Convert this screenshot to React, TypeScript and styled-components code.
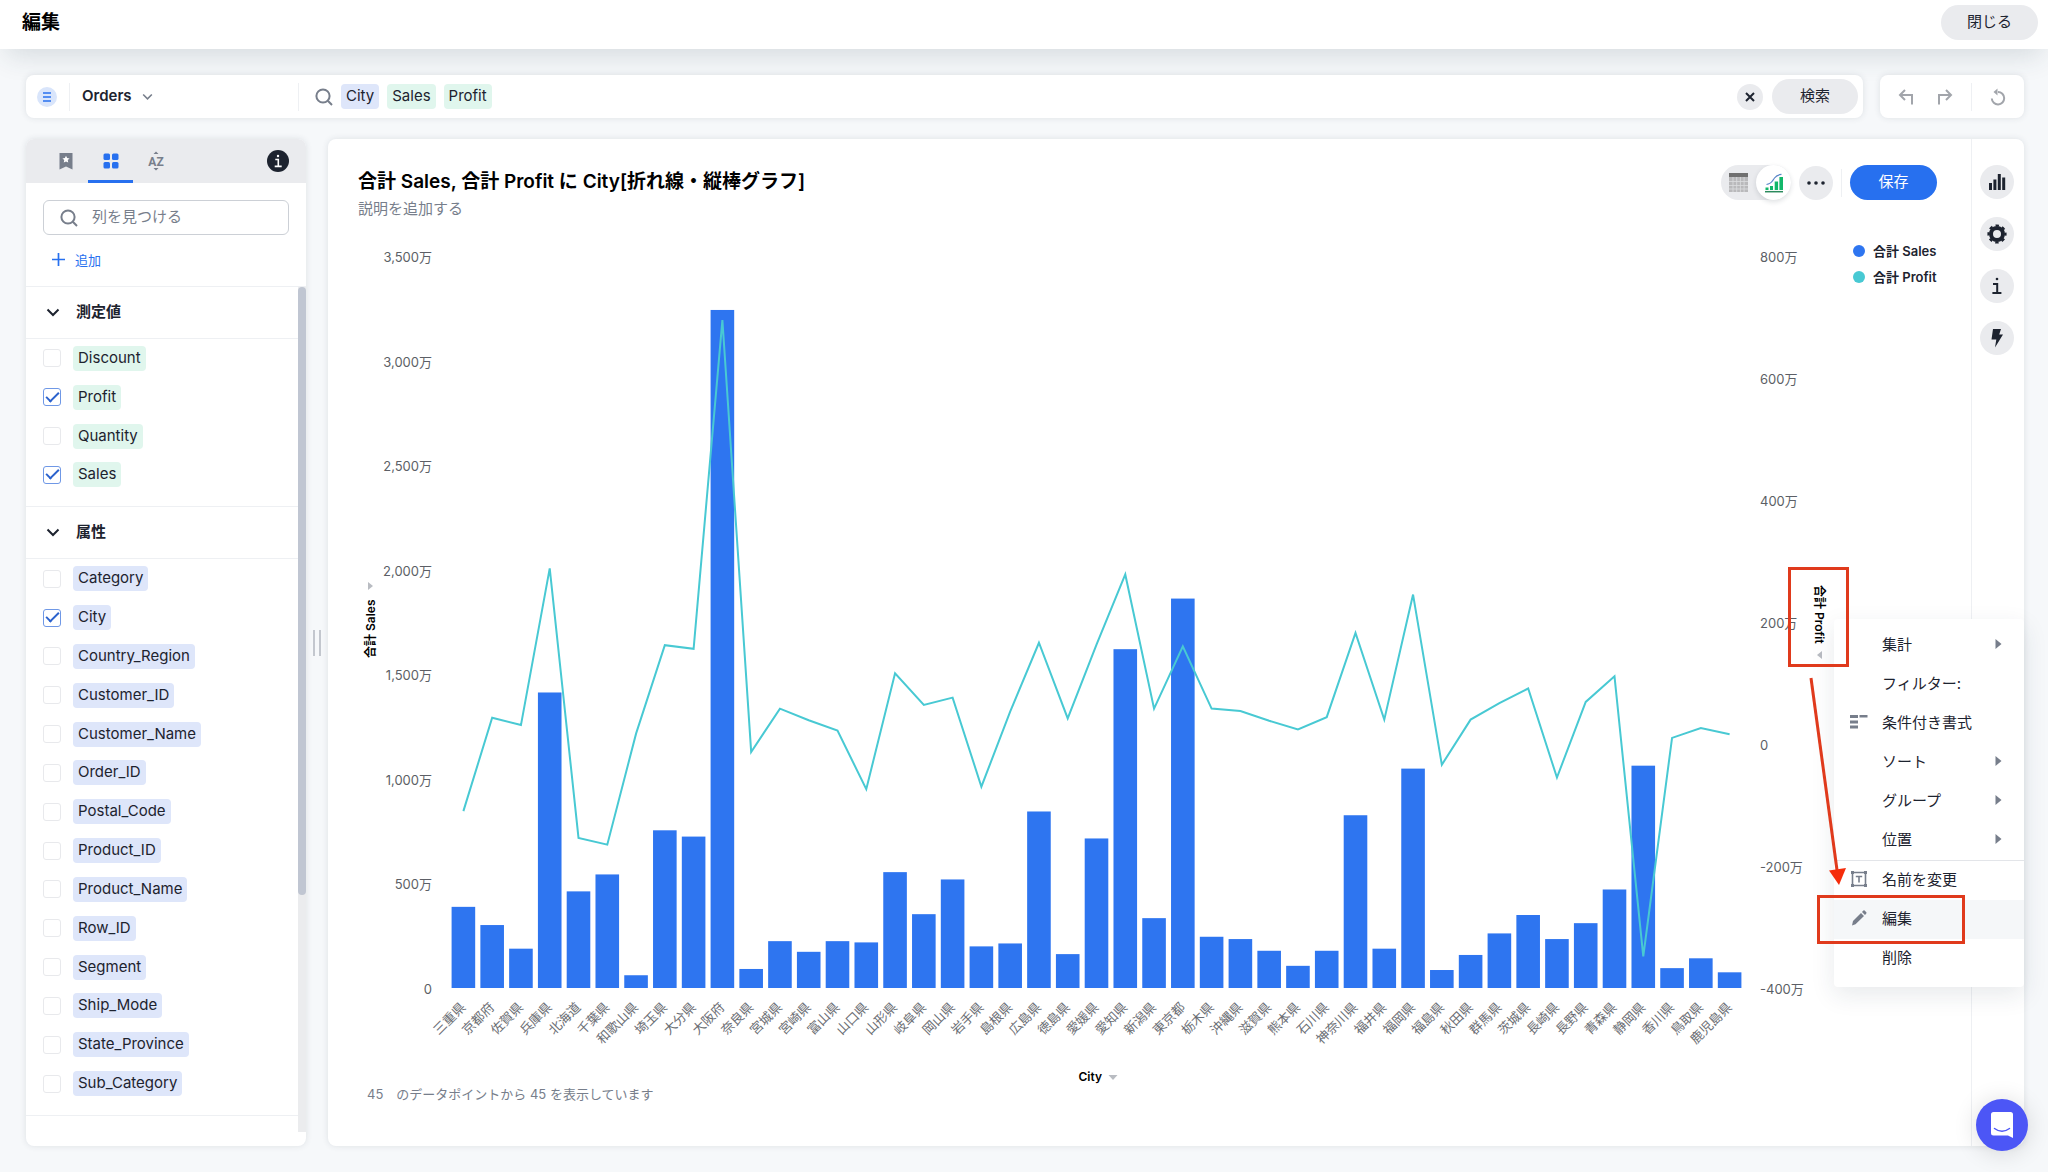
import React, { useLayoutEffect, useRef, useState } from "react";
import styled, { createGlobalStyle, css } from "styled-components";

/* ---------- data ---------- */

type Point = { city: string; sales: number; profit: number };

// Amounts are in units of 10,000 (万)
const points: Point[] = [
  { city: "三重県", sales: 388, profit: -110 },
  { city: "京都府", sales: 301, profit: 43 },
  { city: "佐賀県", sales: 188, profit: 31 },
  { city: "兵庫県", sales: 1413, profit: 288 },
  { city: "北海道", sales: 462, profit: -154 },
  { city: "千葉県", sales: 543, profit: -165 },
  { city: "和歌山県", sales: 61, profit: 17 },
  { city: "埼玉県", sales: 754, profit: 162 },
  { city: "大分県", sales: 724, profit: 156 },
  { city: "大阪府", sales: 3242, profit: 695 },
  { city: "奈良県", sales: 91, profit: -13 },
  { city: "宮城県", sales: 224, profit: 58 },
  { city: "宮崎県", sales: 173, profit: 39 },
  { city: "富山県", sales: 224, profit: 22 },
  { city: "山口県", sales: 218, profit: -74 },
  { city: "山形県", sales: 554, profit: 116 },
  { city: "岐阜県", sales: 353, profit: 64 },
  { city: "岡山県", sales: 519, profit: 76 },
  { city: "岩手県", sales: 199, profit: -70 },
  { city: "島根県", sales: 213, profit: 53 },
  { city: "広島県", sales: 844, profit: 166 },
  { city: "徳島県", sales: 162, profit: 42 },
  { city: "愛媛県", sales: 715, profit: 163 },
  { city: "愛知県", sales: 1620, profit: 278 },
  { city: "新潟県", sales: 334, profit: 58 },
  { city: "東京都", sales: 1862, profit: 160 },
  { city: "栃木県", sales: 245, profit: 58 },
  { city: "沖縄県", sales: 234, profit: 54 },
  { city: "滋賀県", sales: 178, profit: 38 },
  { city: "熊本県", sales: 106, profit: 24 },
  { city: "石川県", sales: 178, profit: 44 },
  { city: "神奈川県", sales: 826, profit: 182 },
  { city: "福井県", sales: 188, profit: 40 },
  { city: "福岡県", sales: 1049, profit: 245 },
  { city: "福島県", sales: 86, profit: -34 },
  { city: "秋田県", sales: 158, profit: 40 },
  { city: "群馬県", sales: 261, profit: 67 },
  { city: "茨城県", sales: 349, profit: 91 },
  { city: "長崎県", sales: 234, profit: -55 },
  { city: "長野県", sales: 310, profit: 69 },
  { city: "青森県", sales: 471, profit: 111 },
  { city: "静岡県", sales: 1063, profit: -348 },
  { city: "香川県", sales: 95, profit: 10 },
  { city: "鳥取県", sales: 142, profit: 26 },
  { city: "鹿児島県", sales: 75, profit: 16 },
];

const measures = ["Discount", "Profit", "Quantity", "Sales"];
const attributes = [
  "Category", "City", "Country_Region", "Customer_ID", "Customer_Name", "Order_ID", "Postal_Code",
  "Product_ID", "Product_Name", "Row_ID", "Segment", "Ship_Mode", "State_Province", "Sub_Category",
];
const selected = ["Profit", "Sales", "City"];

const BLUE = "#2e75f0";
const TEAL = "#48c9d3";
const INK = "#1d232f";
const GRAY = "#777e8b";
const FILL = "#eaebee";
const LINE = "#eef0f3";
const RED = "#e03a1c";
const FONT = `Inter, "Noto Sans CJK JP", sans-serif`;

/* ---------- styles ---------- */

const GlobalStyle = createGlobalStyle`
  *, *::before, *::after { box-sizing: border-box; }
  body { margin: 0; background: #f6f8fa; }
  body, button, input, select { font-family: ${FONT}; color: ${INK}; }
  button { border: 0; padding: 0; background: none; cursor: pointer; }
  h1, h2, h3, p, ul { margin: 0; padding: 0; list-style: none; }
  svg { display: block; }
`;

const Page = styled.div`
  height: 100vh;
  min-height: 900px;
  display: flex;
  flex-direction: column;
`;

const TopBar = styled.header`
  display: flex;
  justify-content: space-between;
  align-items: flex-start;
  height: 49px;
  padding: 5px 10px 0 22px;
  background: #fff;
  box-shadow: 0 12px 28px -6px rgba(40, 60, 75, 0.16);
`;

const PageTitle = styled.h1`
  font-size: 19px;
  line-height: 36px;
  font-weight: 700;
  color: #000;
`;

const Pill = styled.button<{ $primary?: boolean; $width: number }>`
  width: ${(p) => p.$width}px;
  height: 35px;
  padding-bottom: 4px;
  border-radius: 18px;
  font-size: 15px;
  background: ${(p) => (p.$primary ? "#2770ef" : FILL)};
  color: ${(p) => (p.$primary ? "#fff" : INK)};
`;

const Workspace = styled.div`
  flex: 1;
  min-height: 0;
  display: flex;
  flex-direction: column;
  gap: 21px;
  padding: 26px 24px;
`;

const QueryRow = styled.div`
  display: flex;
  gap: 17px;
  height: 43px;
`;

const card = css`
  background: #fff;
  border-radius: 8px;
  box-shadow: 0 0 6px rgba(40, 55, 75, 0.12);
`;

const SearchBar = styled.form`
  ${card}
  flex: 1;
  display: flex;
  align-items: center;
  margin-left: 2px;
  padding: 0 5px 0 11px;
`;

const SourceBadge = styled.span`
  display: grid;
  place-items: center;
  width: 20px;
  height: 20px;
  border-radius: 50%;
  background: #d9e5fb;
`;

const Rule = styled.span`
  width: 1px;
  height: 28px;
  background: ${LINE};
`;

const SourcePicker = styled.label`
  display: flex;
  align-items: center;
  width: 230px;
  margin-left: 12px;
  padding-left: 12px;
  height: 28px;
  border-left: 1px solid ${LINE};
  border-right: 1px solid ${LINE};
`;

const SourceSelect = styled.select`
  appearance: none;
  border: 0;
  width: 60px;
  padding: 0 0 2px;
  background: none;
  font-size: 15px;
  font-weight: 600;
`;

const SearchTokens = styled.div`
  flex: 1;
  display: flex;
  align-items: center;
  gap: 8px;
  padding-left: 16px;
`;

const Chip = styled.span<{ $measure: boolean }>`
  padding: 0 5px 2px;
  border-radius: 4px;
  font-size: 15px;
  line-height: 23px;
  background: ${(p) => (p.$measure ? "#e0f6ed" : "#dee6fa")};
`;

const TokenInput = styled.input`
  flex: 1;
  height: 34px;
  border: 0;
  outline: 0;
  background: none;
  font-size: 15px;
`;

const ClearButton = styled.button`
  display: grid;
  place-items: center;
  width: 26px;
  height: 26px;
  margin-right: 9px;
  border-radius: 50%;
  background: ${FILL};
`;

const History = styled.div`
  ${card}
  display: flex;
  align-items: center;
  width: 144px;
  color: #a2a5ab;
`;

const HistoryButton = styled.button<{ $wide?: boolean }>`
  display: grid;
  place-items: center;
  flex: ${(p) => (p.$wide ? "0 0 52px" : "0 0 39px")};
  height: 34px;
  color: inherit;

  &:first-child { margin-left: 6px; }
  & + & { margin-right: 7px; }
`;

const Panels = styled.div`
  flex: 1;
  min-height: 0;
  display: grid;
  grid-template-columns: 280px 22px minmax(0, 1fr);
  margin-left: 2px;
`;

const Sidebar = styled.aside`
  ${card}
  display: flex;
  flex-direction: column;
  min-height: 0;
  padding-bottom: 14px;
`;

const Tabs = styled.div`
  display: flex;
  align-items: stretch;
  height: 44px;
  padding-left: 17px;
  padding-right: 17px;
  border-radius: 8px 8px 0 0;
  background: ${FILL};
`;

const Tab = styled.button<{ $active?: boolean }>`
  display: grid;
  place-items: center;
  width: 45px;
  border-top: 3px solid transparent;
  border-bottom: 3px solid ${(p) => (p.$active ? "#2770ef" : "transparent")};
`;

const InfoButton = styled.button`
  margin-left: auto;
`;

const FinderBox = styled.label`
  display: flex;
  align-items: center;
  gap: 14px;
  height: 35px;
  margin: 17px 17px 0;
  padding: 0 16px;
  border: 1px solid #ccd0d6;
  border-radius: 6px;
`;

const FinderInput = styled.input`
  flex: 1;
  min-width: 0;
  border: 0;
  outline: 0;
  padding: 0 0 2px;
  background: none;
  font-size: 15px;
  line-height: 22px;
  &::placeholder { color: #777e8b; opacity: 1; }
`;

const AddButton = styled.button`
  display: flex;
  align-items: center;
  align-self: flex-start;
  gap: 10px;
  height: 26px;
  margin: 11px 0 14px 26px;
  font-size: 13px;
  color: #2770ef;
`;

const ScrollArea = styled.div`
  flex: 1;
  min-height: 0;
  display: flex;
  border-top: 1px solid ${LINE};
`;

const Groups = styled.div`
  flex: 1;
  display: flex;
  flex-direction: column;
  padding-bottom: 16px;
`;

const ScrollTrack = styled.div`
  width: 8px;
  background: #ebecee;
`;

const ScrollThumb = styled.div`
  height: 72%;
  border-radius: 4px;
  background: #c0c6d2;
`;

const GroupHeader = styled.button`
  display: flex;
  align-items: center;
  gap: 16px;
  flex: 0 0 52px;
  padding: 0 0 2px 20px;
  border-bottom: 1px solid ${LINE};
  font-size: 15px;
  font-weight: 700;
  line-height: 24px;
`;

const FieldList = styled.ul<{ $grow: number }>`
  flex: ${(p) => p.$grow} 1 0;
  display: grid;
  grid-auto-rows: 1fr;
  align-items: center;
`;

const GroupEnd = styled.div`
  height: 13px;
  border-bottom: 1px solid ${LINE};
`;

const Field = styled.label`
  display: flex;
  align-items: center;
  gap: 12px;
  padding-left: 17px;
`;

const Check = styled.input`
  appearance: none;
  display: grid;
  place-items: center;
  width: 18px;
  height: 18px;
  margin: 0;
  border: 1px solid #e8e9ec;
  border-radius: 3px;

  &:checked { border-color: #6f98e6; }
  &:checked::after {
    content: "";
    width: 13px;
    height: 7px;
    margin-bottom: 4px;
    border: solid #2b62cd;
    border-width: 0 0 2px 2px;
    transform: rotate(-45deg);
  }
`;

const Grip = styled.div`
  display: flex;
  gap: 4px;
  align-self: center;
  justify-content: center;
  height: 26px;
`;

const GripBar = styled.span`
  width: 2px;
  background: #c3c7ce;
`;

const Answer = styled.main`
  ${card}
  position: relative;
  display: flex;
  min-width: 0;
`;

const AnswerBody = styled.section`
  flex: 1;
  min-width: 0;
  display: flex;
  flex-direction: column;
  padding: 26px 34px 43px 30px;
`;

const AnswerHeader = styled.div`
  display: flex;
  justify-content: space-between;
  align-items: flex-start;
`;

const AnswerTitle = styled.h2`
  font-size: 19px;
  line-height: 34px;
  font-weight: 600;
  color: #000;
`;

const AnswerNote = styled.p`
  font-size: 15px;
  line-height: 20px;
  color: ${GRAY};
`;

const Actions = styled.div`
  display: flex;
  align-items: center;
  gap: 8px;
`;

const Toggle = styled.div`
  display: flex;
  width: 70px;
  border-radius: 18px;
  background: ${FILL};
`;

const ToggleButton = styled.button<{ $on?: boolean }>`
  display: grid;
  place-items: center;
  width: 35px;
  height: 35px;
  border-radius: 50%;
  ${(p) => p.$on && css`
    background: #fff;
    box-shadow: 0 2px 5px rgba(30, 40, 60, 0.14);
  `}
`;

const RoundButton = styled.button`
  display: grid;
  place-items: center;
  width: 34px;
  height: 34px;
  border-radius: 50%;
  background: ${FILL};
`;

const ChartRow = styled.div`
  flex: 1;
  min-height: 0;
  display: flex;
  gap: 10px;
`;

const ChartBox = styled.div`
  flex: 1;
  min-width: 0;
  overflow: hidden;
`;

const Legend = styled.ul`
  width: 87px;
  padding: 19px 0 0 3px;
  font-size: 13px;
  font-weight: 600;
  line-height: 26px;
`;

const LegendItem = styled.li<{ $color: string }>`
  display: flex;
  align-items: center;
  gap: 8px;
  white-space: nowrap;
  &::before {
    content: "";
    width: 12px;
    height: 12px;
    border-radius: 50%;
    background: ${(p) => p.$color};
  }
`;

const Footnote = styled.p`
  display: flex;
  gap: 13px;
  padding-left: 9px;
  font-size: 13px;
  line-height: 18px;
  color: ${GRAY};
`;

const Rail = styled.nav`
  display: flex;
  flex-direction: column;
  align-items: center;
  gap: 18px;
  width: 53px;
  padding: 26px 2px 0 0;
  border-left: 1px solid ${LINE};
`;

const Menu = styled.div`
  position: absolute;
  top: 480px;
  right: 0;
  width: 190px;
  padding: 7px 0 9px;
  border-radius: 4px;
  background: #fff;
  box-shadow: 0 8px 24px rgba(30, 45, 70, 0.1);
`;

const MenuItem = styled.button<{ $active?: boolean }>`
  display: grid;
  grid-template-columns: 32px 1fr 7px;
  align-items: center;
  width: 100%;
  height: 39px;
  padding: 0 22px 4px 16px;
  font-size: 15px;
  text-align: left;
  background: ${(p) => (p.$active ? "#f5f7f9" : "none")};
`;

const MenuRule = styled.hr`
  height: 1px;
  margin: 0;
  border: 0;
  background: #e3e5e9;
`;

const Callout = styled.div<{ $top: number; $right: number; $width: number; $height: number }>`
  position: absolute;
  top: ${(p) => p.$top}px;
  right: ${(p) => p.$right}px;
  width: ${(p) => p.$width}px;
  height: ${(p) => p.$height}px;
  border: 3px solid ${RED};
  pointer-events: none;
`;

const CalloutArrow = styled.svg`
  position: absolute;
  top: 531px;
  right: 174px;
  pointer-events: none;
`;

const ChatButton = styled.button`
  position: fixed;
  right: 20px;
  bottom: 21px;
  display: grid;
  place-items: center;
  width: 52px;
  height: 52px;
  border-radius: 50%;
  background: #4c56f6;
  box-shadow: 0 2px 24px rgba(0, 0, 0, 0.14);
`;

/* ---------- icons ---------- */

const SearchIcon = () => (
  <svg width="18" height="18" viewBox="0 0 18 18" fill="none" stroke="#777e8b" strokeWidth="2">
    <circle cx="8" cy="8" r="6.6" />
    <path d="M12.8 12.8 17 17" />
  </svg>
);

const ChevronIcon = ({ color = INK, size = 14 }: { color?: string; size?: number }) => (
  <svg width={size} height={size} viewBox="0 0 14 14" fill="none" stroke={color} strokeWidth="2">
    <path d="m1.5 4.5 5.5 5.5 5.5-5.5" />
  </svg>
);

const InfoGlyph = ({ color, size }: { color: string; size: number }) => (
  <svg width={size} height={size} viewBox="0 0 18 18" fill="none" stroke={color} strokeWidth="2">
    <path d="M5 7h4.2v8.6M4.4 16h9" />
    <circle cx="9" cy="2" r="1.3" fill={color} stroke="none" />
  </svg>
);

const BookmarkIcon = () => (
  <svg width="14" height="18" viewBox="0 0 14 18" fill={GRAY}>
    <path d="M0.5 1h13v16.5L7 14.4.5 17.5z" />
    <path fill="#fff" d="m7 3.8 1.1 2.3 2.5.3-1.85 1.7.5 2.5L7 9.4l-2.25 1.2.5-2.5L3.4 6.4l2.5-.3z" />
  </svg>
);

const GridIcon = () => (
  <svg width="16" height="16" viewBox="0 0 16 16" fill="#2770ef">
    <rect x="0.5" y="0.5" width="6.5" height="6.5" rx="1.5" />
    <rect x="9" y="0.5" width="6.5" height="6.5" rx="1.5" />
    <rect x="0.5" y="9" width="6.5" height="6.5" rx="1.5" />
    <rect x="9" y="9" width="6.5" height="6.5" rx="1.5" />
  </svg>
);

const SortIcon = () => (
  <svg width="18" height="20" viewBox="0 0 18 20" fill={GRAY}>
    <path d="M6.5 3 9 0.5 11.5 3zM6.5 17 9 19.5 11.5 17z" />
    <text x="9" y="14.5" textAnchor="middle" fontFamily="Roboto, sans-serif" fontWeight="700" fontSize="12">AZ</text>
  </svg>
);

const UndoIcon = () => (
  <svg width="16" height="16" viewBox="0 0 16 16" fill="none" stroke="currentColor" strokeWidth="2">
    <path d="M7 1 2 6l5 5M2.5 6H14v9.5" />
  </svg>
);

const RedoIcon = () => (
  <svg width="16" height="16" viewBox="0 0 16 16" fill="none" stroke="currentColor" strokeWidth="2">
    <path d="m9 1 5 5-5 5M13.5 6H2v9.5" />
  </svg>
);

const ResetIcon = () => (
  <svg width="16" height="18" viewBox="0 0 16 18" fill="none" stroke="currentColor" strokeWidth="2">
    <path d="M8 4a6.2 6.2 0 1 1-6.2 6.5" />
    <path d="M7.5 0.5v7L3.5 4z" fill="currentColor" stroke="none" />
  </svg>
);

const TableIcon = () => (
  <svg width="19" height="19" viewBox="0 0 19 19">
    <rect x="0" y="0" width="19" height="19" fill="#b9b9bb" />
    <rect x="0" y="0" width="19" height="4" fill="#707070" />
    <path d="M0 8.5h19M0 12.5h19M0 16h19M4 4v15M7.7 4v15M11.4 4v15M15.1 4v15" stroke="#dcdddf" strokeWidth="0.8" />
  </svg>
);

const ComboIcon = () => (
  <svg width="20" height="20" viewBox="0 0 20 20">
    <path d="M1 18.7h18" stroke="#2b8a5d" strokeWidth="1.5" />
    <path d="M1.5 14.5h3V17h-3zM6 13h3v4H6zM10.7 8.5h3.4V17h-3.4zM15.4 4H19v13h-3.6z" fill="#12b76a" />
    <path d="M2.5 11.5c5-1 5-2.5 8-6.5 1.8-2.4 3.5-3.3 7-3.7" fill="none" stroke="#5a86c8" strokeWidth="1.2" />
  </svg>
);

const BarsIcon = () => (
  <svg width="18" height="18" viewBox="0 0 18 18" fill={INK}>
    <path d="M1 10h3v7H1zM5.4 6.5h3V17h-3zM9.8 1h3v16h-3zM14.2 4.5h3V17h-3z" />
  </svg>
);

const GearIcon = () => (
  <svg width="20" height="20" viewBox="0 0 20 20" fill="none" stroke={INK}>
    <circle cx="10" cy="10" r="6" strokeWidth="4" />
    <circle cx="10" cy="10" r="8.5" strokeWidth="2.2" strokeDasharray="3.4 3.276" strokeDashoffset="1.7" />
  </svg>
);

const BoltIcon = () => (
  <svg width="14" height="20" viewBox="0 0 14 20" fill={INK}>
    <path d="M3 1h8L9.2 6.5H13L5 19.5 6.3 11.5H1.5z" />
  </svg>
);

const FormatIcon = () => (
  <svg width="18" height="14" viewBox="0 0 18 14" fill={GRAY}>
    <path d="M0 0h8v3H0zM9.5 0h8v2.5h-8zM0 5.5h8v3H0zM0 10.500h8v3H0z" />
  </svg>
);

const RenameIcon = () => (
  <svg width="18" height="18" viewBox="0 0 18 18" fill="none" stroke={GRAY} strokeWidth="1.6">
    <path d="M2.5 2.5h13v13h-13zM5.8 6.5h6.4M9 6.5v6" />
    <path d="M1 1h3v3H1zM14 1h3v3h-3zM1 14h3v3H1zM14 14h3v3h-3z" fill={GRAY} stroke="none" />
  </svg>
);

const PencilIcon = () => (
  <svg width="18" height="18" viewBox="0 0 18 18" fill={GRAY}>
    <path d="M2 16.5 3 12 11 4l3 3-8.5 8.2zM12 3l1.4-1.4q.6-.5 1.2 0l1.7 1.7q.5.6 0 1.2L15 5.9z" />
  </svg>
);

const ChatIcon = () => (
  <svg width="24" height="28" viewBox="0 0 24 28">
    <path d="M3.5 1h17Q23 1 23 3.5V27l-5-2.5H3.5Q1 24.5 1 22V3.5Q1 1 3.5 1z" fill="#fff" />
    <path d="M4.5 17.5q7.5 5.5 15 0" fill="none" stroke="#4c56f6" strokeWidth="1.5" strokeLinecap="round" />
  </svg>
);

/* ---------- chart ---------- */

const AxisText = styled.text`
  font-family: ${FONT};
  font-size: 13px;
  fill: #5c5f66;
`;

const AxisTitle = styled.text`
  font-family: ${FONT};
  font-size: 12px;
  font-weight: 600;
  fill: #000;
`;

const CityLabel = styled(AxisText)`
  fill: #6b6e74;
`;

const margin = { top: 37, right: 96, bottom: 97, left: 91 };
const salesTicks = [0, 500, 1000, 1500, 2000, 2500, 3000, 3500];
const profitTicks = [-400, -200, 0, 200, 400, 600, 800];
const tickLabel = (v: number) => (v === 0 ? "0" : `${v.toLocaleString("en-US")}万`);

function ComboChart() {
  const box = useRef<HTMLDivElement>(null);
  const [size, setSize] = useState({ width: 1482, height: 864 });

  useLayoutEffect(() => {
    const node = box.current;
    if (!node) return;
    const measure = () => setSize({ width: node.clientWidth, height: node.clientHeight });
    measure();
    const observer = new ResizeObserver(measure);
    observer.observe(node);
    return () => observer.disconnect();
  }, []);

  const { width, height } = size;
  const plotWidth = width - margin.left - margin.right;
  const plotHeight = height - margin.top - margin.bottom;
  const base = margin.top + plotHeight;
  const right = margin.left + plotWidth;
  const step = plotWidth / points.length;
  const barWidth = step * 0.82;
  const x = (i: number) => margin.left + step * (i + 0.5);
  const ySales = (v: number) => base - (v / 3500) * plotHeight;
  const yProfit = (v: number) => base - ((v + 400) / 1200) * plotHeight;
  const middle = margin.top + plotHeight / 2;
  const center = margin.left + plotWidth / 2;

  return (
    <ChartBox ref={box}>
      <svg width={width} height={height} role="img" aria-label="合計 Sales, 合計 Profit に City">
        {salesTicks.map((t) => (
          <AxisText key={t} x={margin.left - 17} y={ySales(t) + 6} textAnchor="end">{tickLabel(t)}</AxisText>
        ))}
        {profitTicks.map((t) => (
          <AxisText key={t} x={right + 16} y={yProfit(t) + 6}>{tickLabel(t)}</AxisText>
        ))}
        {points.map((p, i) => (
          <rect key={p.city} x={x(i) - barWidth / 2} y={ySales(p.sales)} width={barWidth} height={base - ySales(p.sales)} fill={BLUE} />
        ))}
        <polyline
          points={points.map((p, i) => `${x(i)},${yProfit(p.profit)}`).join(" ")}
          fill="none"
          stroke={TEAL}
          strokeWidth="2"
        />
        {points.map((p, i) => (
          <CityLabel key={p.city} textAnchor="end" transform={`translate(${x(i) + 3} ${base + 20}) rotate(-45)`}>
            {p.city}
          </CityLabel>
        ))}
        <g transform={`translate(12 ${middle}) rotate(-90)`}>
          <AxisTitle x="-36" y="5">合計 Sales</AxisTitle>
          <path d="M32 -2h8l-4 5z" fill="#b9bcc2" />
        </g>
        <g transform={`translate(${width - 20} ${middle}) rotate(90)`}>
          <AxisTitle x="-37" y="5">合計 Profit</AxisTitle>
          <path d="M29 -2h8l-4 5z" fill="#b9bcc2" />
        </g>
        <AxisTitle x={center - 18} y={height - 4}>City</AxisTitle>
        <path d={`M${center + 12} ${height - 10}h9l-4.5 5z`} fill="#b9bcc2" />
      </svg>
    </ChartBox>
  );
}

/* ---------- page ---------- */

function FieldGroup({ title, fields, measure }: { title: string; fields: string[]; measure: boolean }) {
  return (
    <>
      <GroupHeader aria-expanded="true">
        <ChevronIcon />
        {title}
      </GroupHeader>
      <FieldList $grow={fields.length}>
        {fields.map((name) => (
          <li key={name}>
            <Field>
              <Check type="checkbox" defaultChecked={selected.includes(name)} />
              <Chip $measure={measure}>{name}</Chip>
            </Field>
          </li>
        ))}
      </FieldList>
      <GroupEnd />
    </>
  );
}

const Submenu = () => (
  <svg width="7" height="10" viewBox="0 0 7 10" fill={GRAY}>
    <path d="M0.5 0v10L6.5 5z" />
  </svg>
);

type Entry = { label: string; icon?: React.ReactNode; sub?: boolean; active?: boolean };

const menuTop: Entry[] = [
  { label: "集計", sub: true },
  { label: "フィルター:" },
  { label: "条件付き書式", icon: <FormatIcon /> },
  { label: "ソート", sub: true },
  { label: "グループ", sub: true },
  { label: "位置", sub: true },
];
const menuBottom: Entry[] = [
  { label: "名前を変更", icon: <RenameIcon /> },
  { label: "編集", icon: <PencilIcon />, active: true },
  { label: "削除" },
];

const Entries = ({ items }: { items: Entry[] }) => (
  <>
    {items.map((e) => (
      <MenuItem key={e.label} role="menuitem" $active={e.active}>
        <span>{e.icon}</span>
        <span>{e.label}</span>
        {e.sub && <Submenu />}
      </MenuItem>
    ))}
  </>
);

export default function App() {
  return (
    <Page>
      <GlobalStyle />
      <TopBar>
        <PageTitle>編集</PageTitle>
        <Pill $width={97}>閉じる</Pill>
      </TopBar>

      <Workspace>
        <QueryRow>
          <SearchBar onSubmit={(e) => e.preventDefault()}>
            <SourceBadge>
              <svg width="8" height="10" viewBox="0 0 8 10" stroke="#2770ef" strokeWidth="1.3">
                <path d="M0 1h8M0 5h8M0 9h8" />
              </svg>
            </SourceBadge>
            <SourcePicker>
              <SourceSelect aria-label="データソース">
                <option>Orders</option>
              </SourceSelect>
              <ChevronIcon color={GRAY} size={11} />
            </SourcePicker>
            <SearchTokens>
              <SearchIcon />
              <Chip $measure={false}>City</Chip>
              <Chip $measure>Sales</Chip>
              <Chip $measure>Profit</Chip>
              <TokenInput type="text" aria-label="検索" />
            </SearchTokens>
            <ClearButton type="button" aria-label="クリア">
              <svg width="10" height="10" viewBox="0 0 10 10" stroke={INK} strokeWidth="2">
                <path d="m1 1 8 8M9 1 1 9" />
              </svg>
            </ClearButton>
            <Pill $width={86} type="submit">検索</Pill>
          </SearchBar>
          <History>
            <HistoryButton aria-label="元に戻す"><UndoIcon /></HistoryButton>
            <HistoryButton aria-label="やり直す"><RedoIcon /></HistoryButton>
            <Rule />
            <HistoryButton $wide aria-label="リセット"><ResetIcon /></HistoryButton>
          </History>
        </QueryRow>

        <Panels>
          <Sidebar>
            <Tabs>
              <Tab aria-label="ブックマーク"><BookmarkIcon /></Tab>
              <Tab $active aria-label="列"><GridIcon /></Tab>
              <Tab aria-label="並べ替え"><SortIcon /></Tab>
              <InfoButton aria-label="情報">
                <svg width="22" height="22" viewBox="0 0 22 22" fill="none" stroke="#fff" strokeWidth="1.6">
                  <circle cx="11" cy="11" r="11" fill={INK} stroke="none" />
                  <path d="M8.3 9.5h3v6.5M7.7 16.4h7" />
                  <circle cx="11" cy="6" r="1.2" fill="#fff" stroke="none" />
                </svg>
              </InfoButton>
            </Tabs>
            <FinderBox>
              <SearchIcon />
              <FinderInput type="text" placeholder="列を見つける" aria-label="列を見つける" />
            </FinderBox>
            <AddButton>
              <svg width="13" height="13" viewBox="0 0 13 13" stroke="currentColor" strokeWidth="1.7">
                <path d="M0 6.5h13M6.5 0v13" />
              </svg>
              追加
            </AddButton>
            <ScrollArea>
              <Groups>
                <FieldGroup title="測定値" fields={measures} measure />
                <FieldGroup title="属性" fields={attributes} measure={false} />
              </Groups>
              <ScrollTrack>
                <ScrollThumb />
              </ScrollTrack>
            </ScrollArea>
          </Sidebar>

          <Grip>
            <GripBar />
            <GripBar />
          </Grip>

          <Answer>
            <AnswerBody>
              <AnswerHeader>
                <div>
                  <AnswerTitle>合計 Sales, 合計 Profit に City[折れ線・縦棒グラフ]</AnswerTitle>
                  <AnswerNote>説明を追加する</AnswerNote>
                </div>
                <Actions>
                  <Toggle>
                    <ToggleButton aria-label="表"><TableIcon /></ToggleButton>
                    <ToggleButton $on aria-label="グラフ"><ComboIcon /></ToggleButton>
                  </Toggle>
                  <RoundButton aria-label="その他">
                    <svg width="18" height="4" viewBox="0 0 18 4" fill={INK}>
                      <circle cx="2" cy="2" r="1.8" />
                      <circle cx="9" cy="2" r="1.8" />
                      <circle cx="16" cy="2" r="1.8" />
                    </svg>
                  </RoundButton>
                  <Rule />
                  <Pill $primary $width={87}>保存</Pill>
                </Actions>
              </AnswerHeader>
              <ChartRow>
                <ComboChart />
                <Legend>
                  <LegendItem $color={BLUE}>合計 Sales</LegendItem>
                  <LegendItem $color={TEAL}>合計 Profit</LegendItem>
                </Legend>
              </ChartRow>
              <Footnote>
                <span>45</span>
                <span>のデータポイントから 45 を表示しています</span>
              </Footnote>
            </AnswerBody>
            <Rail>
              <RoundButton aria-label="グラフの種類"><BarsIcon /></RoundButton>
              <RoundButton aria-label="設定"><GearIcon /></RoundButton>
              <RoundButton aria-label="情報"><InfoGlyph color={INK} size={18} /></RoundButton>
              <RoundButton aria-label="アクション"><BoltIcon /></RoundButton>
            </Rail>

            <Menu role="menu">
              <Entries items={menuTop} />
              <MenuRule />
              <Entries items={menuBottom} />
            </Menu>
            <Callout $top={428} $right={175} $width={61} $height={100} />
            <Callout $top={756} $right={59} $width={148} $height={49} />
            <CalloutArrow width="50" height="220" viewBox="0 0 50 220">
              <path d="M11 8 37 200" stroke={RED} strokeWidth="3" />
              <path d="M29 200.5 46 198 39 215z" fill="#f52c0a" />
            </CalloutArrow>
          </Answer>
        </Panels>
      </Workspace>

      <ChatButton aria-label="チャット"><ChatIcon /></ChatButton>
    </Page>
  );
}
